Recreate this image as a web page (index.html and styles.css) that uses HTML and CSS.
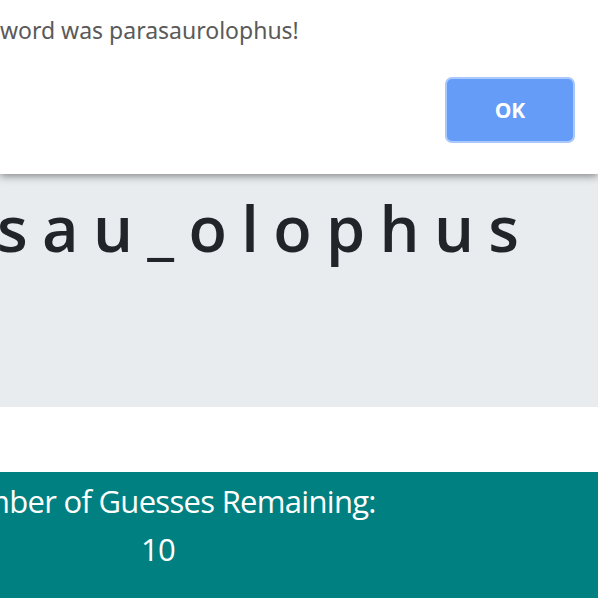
FILE: index.html
```html
<!DOCTYPE html>
<html>
<head>
<meta charset="utf-8">
<link rel="stylesheet" href="styles.css">
</head>
<body>
<div class="page">
  <div class="jumbo">
    <div class="word">p a r a s a u _ o l o p h u s</div>
  </div>
  <div class="spacer"></div>
  <div class="stats">
    <div class="stats-col">
      <div class="stats-label">Number of Guesses Remaining:</div>
      <div class="stats-value">10</div>
    </div>
  </div>
</div>
<div class="dialog">
  <div class="dialog-msg">The word was parasaurolophus!</div>
  <div class="dialog-actions">
    <button class="ok-btn">OK</button>
  </div>
</div>
</body>
</html>
```
FILE: styles.css
```css
html, body {
  margin: 0;
  padding: 0;
  overflow: hidden;
  width: 598px;
  height: 598px;
  background: #ffffff;
}
.page {
  font-family: "Open Sans", "Noto Sans", sans-serif;
}
.jumbo {
  background: #e9ecef;
  height: 407px;
  padding-top: 190px;
  box-sizing: border-box;
}
.word {
  font-size: 63px;
  font-weight: 600;
  line-height: 1.2;
  letter-spacing: -1px;
  color: #212529;
  white-space: nowrap;
  margin-left: -200px;
}
.spacer {
  height: 65px;
}
.stats {
  background: #008080;
  height: 126px;
  color: #ffffff;
}
.stats-col {
  width: 460px;
  margin-left: -72px;
  text-align: center;
  font-size: 31px;
  letter-spacing: -0.7px;
  line-height: 48px;
  padding-top: 5px;
}
.stats-label, .stats-value {
  white-space: nowrap;
}
.dialog {
  position: absolute;
  top: 0;
  left: 0;
  width: 598px;
  height: 174px;
  background: #ffffff;
  box-shadow: 0 2px 8px rgba(0, 0, 0, 0.45);
  font-family: "Noto Sans", "Open Sans", sans-serif;
}
.dialog-msg {
  font-size: 23px;
  color: #5a5a5a;
  white-space: nowrap;
  margin-left: -46px;
  padding-top: 14px;
  line-height: 32px;
}
.dialog-actions {
  display: flex;
  justify-content: flex-end;
  padding-right: 23px;
  padding-top: 31px;
}
.ok-btn {
  width: 130px;
  height: 66px;
  background: #659cf8;
  border: 2px solid #a9c8fb;
  border-radius: 7px;
  color: #ffffff;
  font-family: "Open Sans", sans-serif;
  font-weight: 700;
  font-size: 21px;
  padding: 0;
}
```
